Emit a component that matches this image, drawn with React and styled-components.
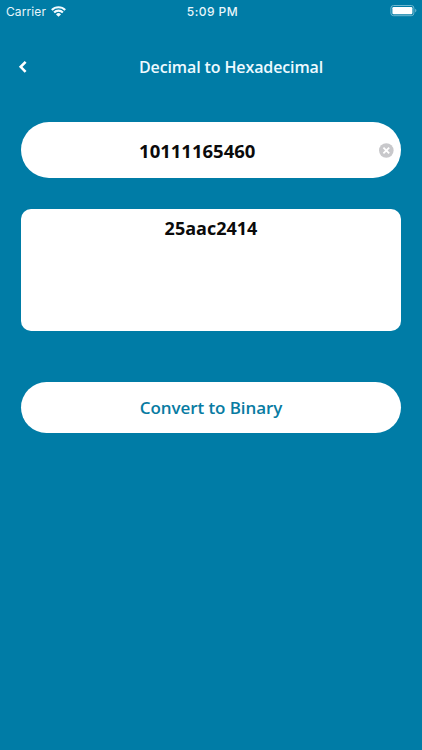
import React from 'react';
import styled, { createGlobalStyle } from 'styled-components';

const GlobalStyle = createGlobalStyle`
  body {
    margin: 0;
    background-color: #007ca6;
  }
`;

const Screen = styled.div`
  display: flex;
  flex-direction: column;
  height: 750px;
  box-sizing: border-box;
  overflow: hidden;
  background-color: #007ca6;
  font-family: 'Trebuchet MS', 'Open Sans', 'Noto Sans', sans-serif;
  font-weight: 600;
`;

const StatusBar = styled.div`
  display: grid;
  grid-template-columns: 1fr auto 1fr;
  align-items: center;
  height: 22px;
  padding: 0 4px 0 6px;
  font-family: 'Inter', sans-serif;
  color: #e8f6fb;
`;

const Carrier = styled.div`
  display: flex;
  align-items: center;
  gap: 5px;
  font-size: 12px;
  font-weight: 400;
  letter-spacing: 0.1px;
`;

const Time = styled.div`
  padding-left: 1px;
  font-size: 12px;
  font-weight: 500;
  letter-spacing: 0.45px;
`;

const Battery = styled.div`
  justify-self: end;
  display: flex;
`;

const Header = styled.div`
  display: grid;
  grid-template-columns: 118px 1fr;
  align-items: center;
  height: 40px;
  margin: 24px 21px 0 18px;
  padding-top: 1px;
  box-sizing: border-box;
`;

const BackButton = styled.button`
  display: flex;
  width: fit-content;
  padding: 0;
  border: none;
  background: none;
`;

const Title = styled.span`
  margin-left: 3px;
  font-size: 16px;
  line-height: 20px;
  letter-spacing: -0.12px;
  white-space: nowrap;
  color: #eefaff;
`;

const Content = styled.div`
  display: flex;
  flex-direction: column;
  margin: 36.4px 20.6px 0 20.6px;
`;

const InputBox = styled.div`
  display: flex;
  align-items: center;
  height: 56px;
  padding-right: 7.5px;
  box-sizing: border-box;
  border-radius: 28px;
  background-color: #ffffff;
`;

const InputValue = styled.span`
  flex: 1;
  padding-right: 5px;
  text-align: center;
  font-size: 18.5px;
  font-weight: 700;
  color: #0b0b0b;
`;

const ResultBox = styled.div`
  height: 122px;
  margin-top: 30.6px;
  padding-top: 6px;
  box-sizing: border-box;
  border-radius: 10px;
  background-color: #ffffff;
  text-align: center;
  font-size: 18px;
  font-weight: 700;
  line-height: 26px;
  color: #0b0b0b;
`;

const ConvertButton = styled.button`
  height: 51px;
  margin-top: 51px;
  padding: 0;
  border: none;
  border-radius: 26px;
  background-color: #ffffff;
  font-family: inherit;
  font-size: 17px;
  font-weight: 600;
  letter-spacing: -0.08px;
  color: #087ba2;
`;

const WifiIcon = () => (
  <svg width="15" height="11" viewBox="0 0 15 11" fill="none" stroke="#f2fbff" strokeWidth="2.1">
    <path d="M0.8 4a9.4 9.4 0 0 1 13.4 0" />
    <path d="M3.1 6.5a6.1 6.1 0 0 1 8.8 0" />
    <path d="M7.5 10.8L5 8.4a3.5 3.5 0 0 1 5 0z" fill="#f2fbff" stroke="none" />
  </svg>
);

const BatteryIcon = () => (
  <svg width="28" height="12" viewBox="0 0 28 12">
    <rect x="0.9" y="0.5" width="23" height="10.2" rx="2.6" fill="none" stroke="#6fb8d0" />
    <rect x="2.4" y="2" width="20" height="7.2" rx="1.2" fill="#ffffff" />
    <path d="M25.2 3.8c1.6 0.6 1.6 3 0 3.6z" fill="#6fb8d0" />
  </svg>
);

const BackIcon = () => (
  <svg width="10" height="14" viewBox="0 0 10 14" fill="none" stroke="#ffffff" strokeWidth="2.6">
    <path d="M7.6 1.8L2.7 6.8l4.9 5" />
  </svg>
);

const ClearIcon = () => (
  <svg width="15" height="15" viewBox="0 0 15 15">
    <circle cx="7.3" cy="7.5" r="7.3" fill="#c8c8cb" />
    <path d="M4.4 4.6l5.8 5.8M10.2 4.6l-5.8 5.8" stroke="#ffffff" strokeWidth="1.8" />
  </svg>
);

const App = () => {
  return (
    <>
      <GlobalStyle />
      <Screen>
        <StatusBar>
          <Carrier>
            Carrier
            <WifiIcon />
          </Carrier>
          <Time>5:09 PM</Time>
          <Battery>
            <BatteryIcon />
          </Battery>
        </StatusBar>
        <Header>
          <BackButton aria-label="Back">
            <BackIcon />
          </BackButton>
          <Title>Decimal to Hexadecimal</Title>
        </Header>
        <Content>
          <InputBox>
            <InputValue>10111165460</InputValue>
            <ClearIcon />
          </InputBox>
          <ResultBox>25aac2414</ResultBox>
          <ConvertButton>Convert to Binary</ConvertButton>
        </Content>
      </Screen>
    </>
  );
};

export default App;
